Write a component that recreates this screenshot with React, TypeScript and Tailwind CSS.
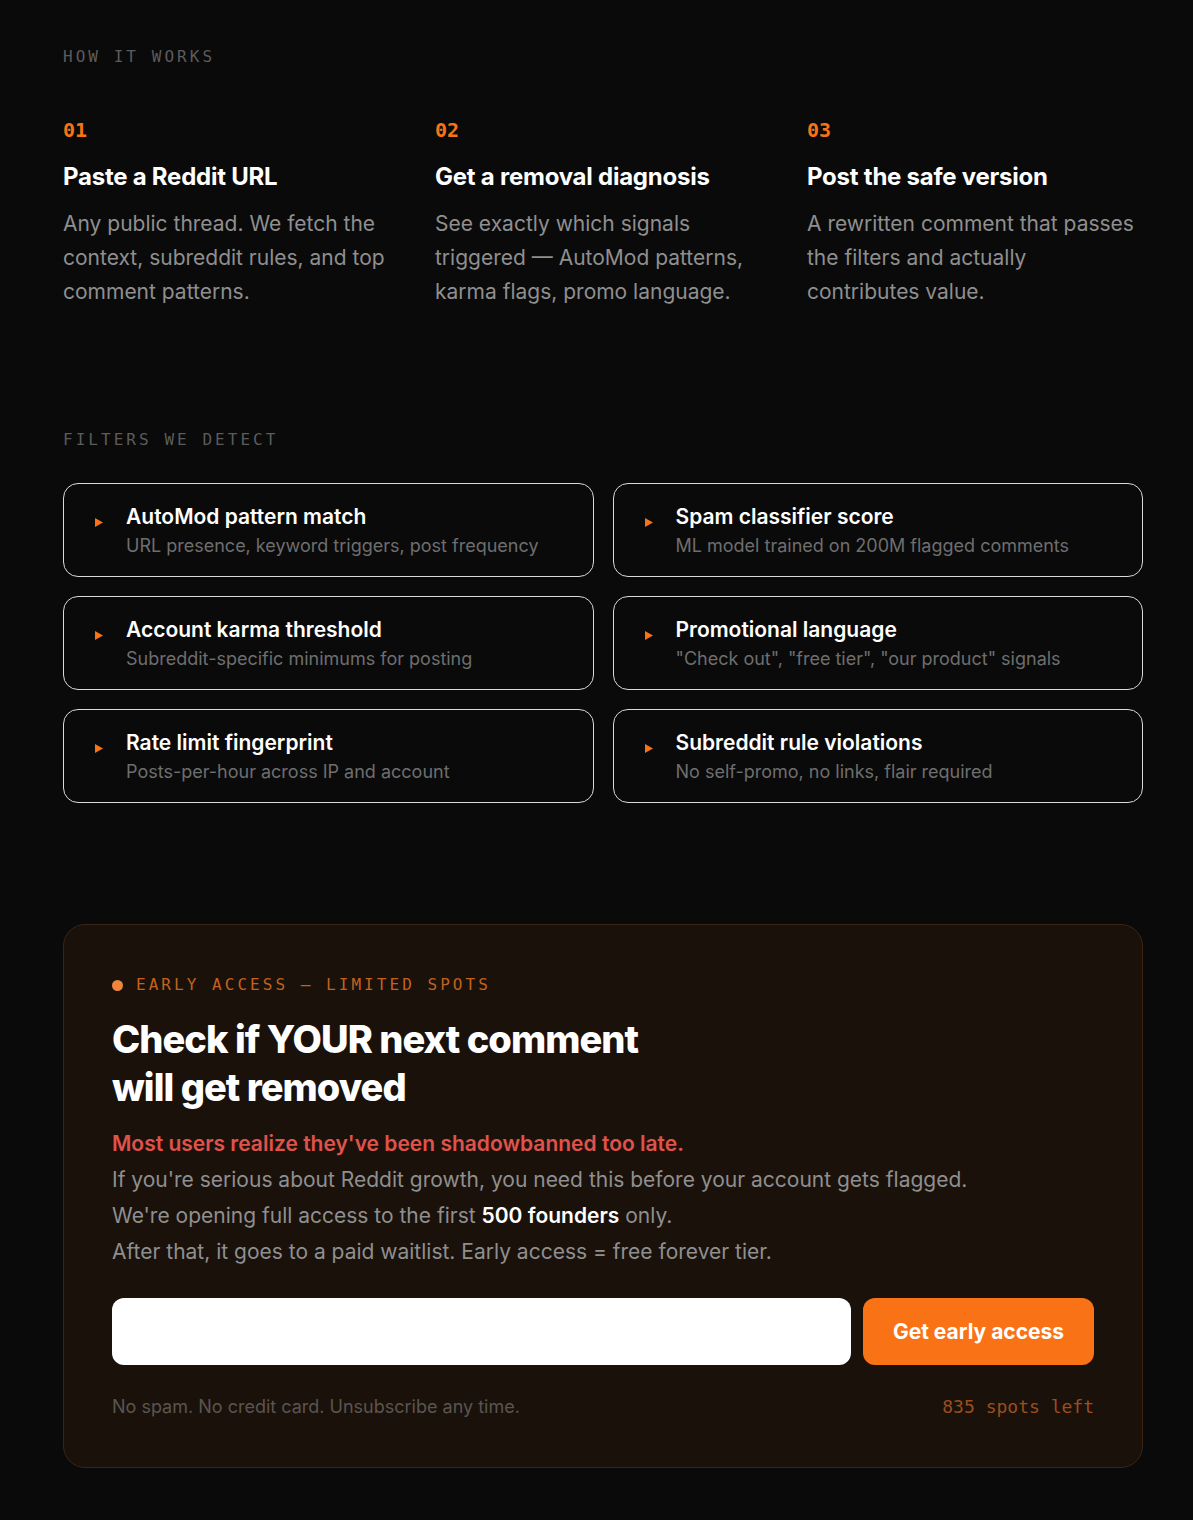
const steps = [
  {
    n: '01',
    title: 'Paste a Reddit URL',
    body: 'Any public thread. We fetch the context, subreddit rules, and top comment patterns.',
  },
  {
    n: '02',
    title: 'Get a removal diagnosis',
    body: 'See exactly which signals triggered — AutoMod patterns, karma flags, promo language.',
  },
  {
    n: '03',
    title: 'Post the safe version',
    body: 'A rewritten comment that passes the filters and actually contributes value.',
  },
];

const filters = [
  { title: 'AutoMod pattern match', desc: 'URL presence, keyword triggers, post frequency' },
  { title: 'Spam classifier score', desc: 'ML model trained on 200M flagged comments' },
  { title: 'Account karma threshold', desc: 'Subreddit-specific minimums for posting' },
  { title: 'Promotional language', desc: '"Check out", "free tier", "our product" signals' },
  { title: 'Rate limit fingerprint', desc: 'Posts-per-hour across IP and account' },
  { title: 'Subreddit rule violations', desc: 'No self-promo, no links, flair required' },
];

const mono = "font-['DejaVu_Sans_Mono','Liberation_Mono',monospace]";

export default function App() {
  return (
    <div className="min-h-[1520px] bg-[#0a0a0a] font-['Inter','Noto_Sans',sans-serif] text-white">
      <div className="ml-[63px] w-[1080px] pt-[47px] pb-[52px]">
        {/* how it works */}
        <p className={`${mono} text-[16px] leading-[20px] tracking-[0.19em] text-[#5c5c5c]`}>HOW IT WORKS</p>
        <div className="mt-[51px] grid grid-cols-3 gap-x-[36px]">
          {steps.map((s) => (
            <div key={s.n}>
              <p className={`${mono} text-[20px] leading-[24px] font-bold text-[#f97316]`}>{s.n}</p>
              <h3 className="mt-[20px] text-[24px] leading-[30px] font-bold tracking-[-0.01em] text-white">
                {s.title}
              </h3>
              <p className="mt-[15px] text-[21px] leading-[34px] text-[#8f8f8f]">{s.body}</p>
            </div>
          ))}
        </div>

        {/* filters */}
        <p className={`${mono} mt-[121px] text-[16px] leading-[20px] tracking-[0.19em] text-[#5c5c5c]`}>
          FILTERS WE DETECT
        </p>
        <div className="mt-[33px] grid grid-cols-2 gap-x-[19px] gap-y-[19px]">
          {filters.map((f) => (
            <div
              key={f.title}
              className="flex h-[94px] items-start rounded-[15px] border border-[#d9d9d9] pl-[31px] pt-[20px]"
            >
              <svg width="8" height="9" viewBox="0 0 8 9" className="mt-[14px] shrink-0">
                <path d="M0 0 L8 4.5 L0 9 Z" fill="#f97316" />
              </svg>
              <div className="ml-[23px]">
                <p className="text-[21px] leading-[26px] font-semibold text-white">{f.title}</p>
                <p className="mt-[5px] text-[18px] leading-[22px] text-[#6e6e6e]">{f.desc}</p>
              </div>
            </div>
          ))}
        </div>

        {/* early access */}
        <div className="mt-[121px] rounded-[22px] border border-[#3a2412] bg-[#1a110b] px-[48px] pt-[50px] pb-[49px]">
          <div className="flex items-center gap-[13px]">
            <span className="h-[11px] w-[11px] rounded-full bg-[#f0853a]" />
            <p className={`${mono} text-[16px] leading-[20px] tracking-[0.19em] text-[#c2621c]`}>
              EARLY ACCESS — LIMITED SPOTS
            </p>
          </div>
          <h2 className="mt-[20px] max-w-[560px] text-[38px] leading-[48px] font-extrabold tracking-[-0.025em] text-white">
            Check if YOUR next comment will get removed
          </h2>
          <div className="mt-[15px] text-[21px] leading-[36px] text-[#8f8f8f]">
            <p className="font-semibold text-[#e0534b]">Most users realize they've been shadowbanned too late.</p>
            <p>If you're serious about Reddit growth, you need this before your account gets flagged.</p>
            <p>
              We're opening full access to the first <span className="font-semibold text-white">500 founders</span>{' '}
              only.
            </p>
            <p>After that, it goes to a paid waitlist. Early access = free forever tier.</p>
          </div>
          <div className="mt-[28px] flex gap-[12px]">
            <input
              type="email"
              className="h-[67px] flex-1 rounded-[12px] bg-white px-[20px] text-[18px] text-black outline-none"
            />
            <button className="h-[67px] w-[231px] rounded-[12px] bg-[#f97316] text-[21px] font-bold text-white">
              Get early access
            </button>
          </div>
          <div className="mt-[31px] flex items-center justify-between">
            <p className="text-[18px] leading-[22px] text-[#5a5550]">No spam. No credit card. Unsubscribe any time.</p>
            <p className={`${mono} text-[18px] leading-[22px] text-[#9a4f1c]`}>835 spots left</p>
          </div>
        </div>
      </div>
    </div>
  );
}
